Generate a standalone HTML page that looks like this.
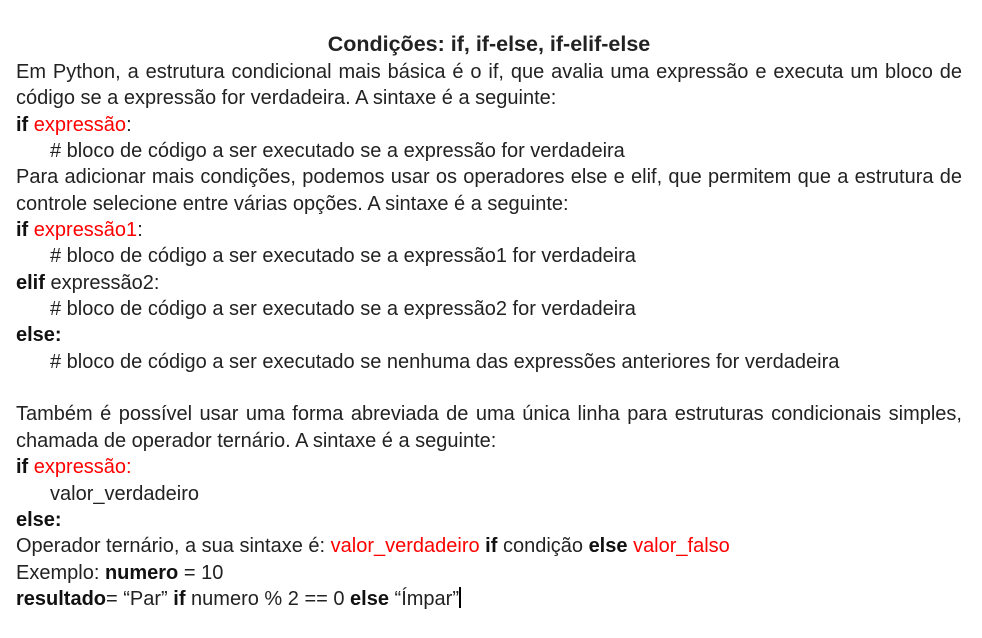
<!DOCTYPE html>
<html><head><meta charset="utf-8"><style>
body{margin:0;background:#fff;}
.w{position:absolute;left:16px;top:30px;width:946px;font-family:"Liberation Sans",Arial,sans-serif;font-size:20px;line-height:26.35px;color:#222;}
p{margin:0;}
.j{text-align:justify;}
.c{text-align:center;font-weight:bold;font-size:21.5px;line-height:29px;}
.i{padding-left:34px;}
.r{color:#f00;}
b{color:#111;}
.cur{display:inline-block;width:2px;height:21px;background:#000;vertical-align:-3px;}
</style></head><body><div class="w">
<p class="c">Condições: if, if-else, if-elif-else</p>
<p class="j">Em Python, a estrutura condicional mais básica é o if, que avalia uma expressão e executa um bloco de código se a expressão for verdadeira. A sintaxe é a seguinte:</p>
<p><b>if</b> <span class="r">expressão</span>:</p>
<p class="i"># bloco de código a ser executado se a expressão for verdadeira</p>
<p class="j">Para adicionar mais condições, podemos usar os operadores else e elif, que permitem que a estrutura de controle selecione entre várias opções. A sintaxe é a seguinte:</p>
<p><b>if</b> <span class="r">expressão1</span>:</p>
<p class="i"># bloco de código a ser executado se a expressão1 for verdadeira</p>
<p><b>elif</b> expressão2:</p>
<p class="i"># bloco de código a ser executado se a expressão2 for verdadeira</p>
<p><b>else:</b></p>
<p class="i"># bloco de código a ser executado se nenhuma das expressões anteriores for verdadeira</p>
<p>&nbsp;</p>
<p class="j">Também é possível usar uma forma abreviada de uma única linha para estruturas condicionais simples, chamada de operador ternário. A sintaxe é a seguinte:</p>
<p><b>if</b> <span class="r">expressão:</span></p>
<p class="i">valor_verdadeiro</p>
<p><b>else:</b></p>
<p>Operador ternário, a sua sintaxe é: <span class="r">valor_verdadeiro</span> <b>if</b> condição <b>else</b> <span class="r">valor_falso</span></p>
<p>Exemplo: <b>numero</b> = 10</p>
<p><b>resultado</b>= “Par” <b>if</b> numero % 2 == 0 <b>else</b> “Ímpar”<span class="cur"></span></p>
</div></body></html>
